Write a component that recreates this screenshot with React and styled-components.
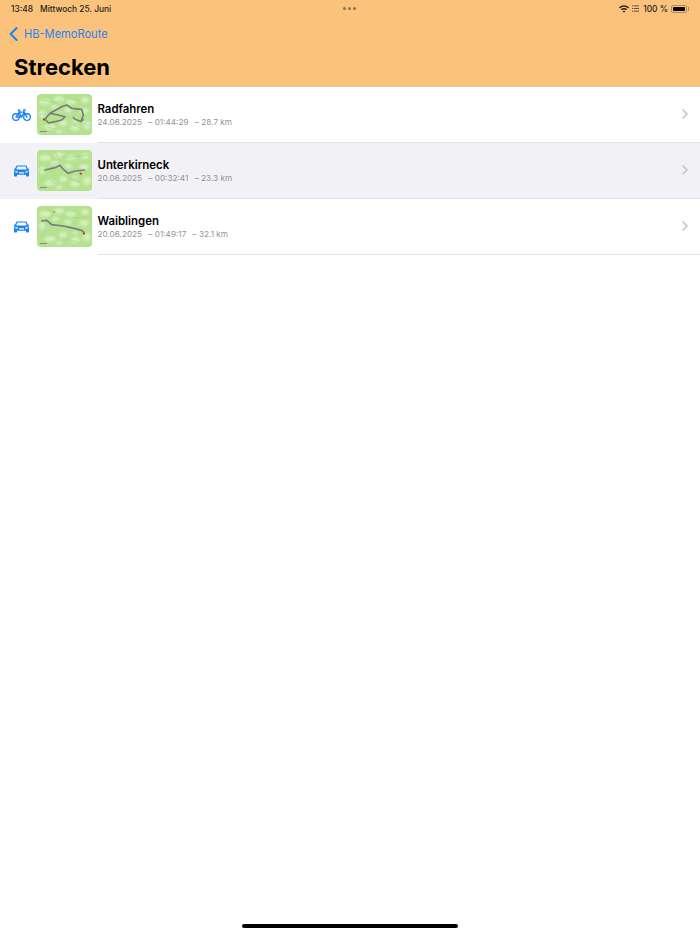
import React from "react";
import styled, { createGlobalStyle } from "styled-components";

const GlobalStyle = createGlobalStyle`
  html, body {
    margin: 0;
    padding: 0;
    background: #fff;
    font-family: Inter, "Liberation Sans", sans-serif;
  }
  * { box-sizing: border-box; }
`;

const routes = [
  { id: 1, name: "Radfahren", date: "24.06.2025", time: "01:44:29", dist: "28.7 km", kind: "bike", map: "a" },
  { id: 2, name: "Unterkirneck", date: "20.06.2025", time: "00:32:41", dist: "23.3 km", kind: "car", map: "b", active: true },
  { id: 3, name: "Waiblingen", date: "20.06.2025", time: "01:49:17", dist: "32.1 km", kind: "car", map: "c" },
];

const BikeIcon = () => (
  <svg width="20" height="14" viewBox="0 0 20 14" fill="none" stroke="#1c82f7" strokeWidth="1.4" strokeLinecap="round" strokeLinejoin="round">
    <circle cx="4.2" cy="9.2" r="3.5" />
    <circle cx="15.8" cy="9.2" r="3.5" />
    <path d="M4.2 9.2 L7.6 4 H13 L15.8 9.2 M7.6 4 L10 9.2 H4.2 M10 9.2 L13 4 L12.2 1.6 H14.2 M6.4 1.8 H8.6 M7.2 1.8 L7.6 4" />
  </svg>
);

const CarIcon = () => (
  <svg width="15" height="12" viewBox="0 0 15 12">
    <path
      fill="#1c82f7"
      fillRule="evenodd"
      d="M3.6 0.4 H11.4 C12.3 0.4 12.8 0.9 13.1 1.7 L13.8 3.6 H14.4 C14.8 3.6 15 3.9 15 4.2 C15 4.6 14.7 4.8 14.3 4.9 C14.8 5.5 15 6.2 15 7 V10.4 C15 11 14.6 11.5 14 11.5 H13 C12.4 11.5 12 11 12 10.4 V9.8 H3 V10.4 C3 11 2.6 11.5 2 11.5 H1 C0.4 11.5 0 11 0 10.4 V7 C0 6.2 0.2 5.5 0.7 4.9 C0.3 4.8 0 4.6 0 4.2 C0 3.9 0.2 3.6 0.6 3.6 H1.2 L1.9 1.7 C2.2 0.9 2.7 0.4 3.6 0.4 Z M3.8 1.6 C3.4 1.6 3.1 1.8 3 2.2 L2.4 4 C2.3 4.3 2.5 4.5 2.8 4.5 H12.2 C12.5 4.5 12.7 4.3 12.6 4 L12 2.2 C11.9 1.8 11.6 1.6 11.2 1.6 Z M1.4 6 V7.4 L3.8 7.8 V6.6 Z M13.6 6 L11.2 6.6 V7.8 L13.6 7.4 Z M5 7.2 V8.4 H10 V7.2 Z"
    />
  </svg>
);

const WifiIcon = () => (
  <svg width="10" height="8" viewBox="0 0 11 8">
    <path fill="#222" d="M5.5 0 C7.6 0 9.5 .8 11 2.2 L9.9 3.4 C8.7 2.3 7.2 1.6 5.5 1.6 C3.8 1.6 2.3 2.3 1.1 3.4 L0 2.2 C1.5 .8 3.4 0 5.5 0 Z M5.5 3 C6.8 3 8 3.5 8.9 4.3 L7.8 5.5 C7.2 5 6.4 4.6 5.5 4.6 C4.6 4.6 3.8 5 3.2 5.5 L2.1 4.3 C3 3.5 4.2 3 5.5 3 Z M5.5 5.8 L7 6.6 L5.5 8 L4 6.6 Z" />
  </svg>
);

const ListIcon = () => (
  <svg width="7" height="7" viewBox="0 0 8 7" fill="#444">
    <rect x="0" y="0" width="1.2" height="1" />
    <rect x="2" y="0" width="6" height="1" />
    <rect x="0" y="3" width="1.2" height="1" />
    <rect x="2" y="3" width="6" height="1" />
    <rect x="0" y="6" width="1.2" height="1" />
    <rect x="2" y="6" width="6" height="1" />
  </svg>
);

// hand-placed from the reference thumbnails
const tracks = {
  a: {
    line: "M8 25 L11.5 29 L18 27.7 L24.7 26 L28 22.7 L21.3 21 L13 19.3 L8 25 M13 19.3 L24.7 12.7 L29.7 11 L34.7 14.3 L44.7 15.3 L46.3 21 L44 27.5 L38 25.3 L36 23 M44 27.5 L46.5 25",
    river: "M0 21 L12 19 L24 17 L36 22 L46 29 L55 33",
    roads: "M5 6 L20 9 L24 4 M30 3 L44 8 M10 33 L24 36 M36 31 L48 36",
    start: [8.5, 25.5, "#39c93a"],
    end: [7, 25.5, "#e8262a"],
  },
  b: {
    line: "M8 20 L18 17.7 L23 15.3 L26.3 19.3 L31.3 23.3 L38 21 L48 20",
    river: "M0 22 L8 19 L20 13 L26 15 L32 21 L42 23 L55 17",
    roads: "M18 2 L24 12 M24 6 L34 8 M36 7 L52 5 M30 27 L44 33 M14 31 L22 36",
    start: [8, 20, "#39e03a"],
    end: [43.7, 23.7, "#e0262a"],
  },
  c: {
    line: "M4 15 L9.7 14.3 L14.7 18.7 L26.3 20 L38 22.7 L44.7 24.3 L47 26.7",
    river: "M0 24 L12 21 L24 19 L40 25 L55 22",
    roads: "M17 6 L13 14 M36 12 L50 11 M10 2 L17 6 M26 32 L40 36",
    start: [17.3, 6, "#d8a020"],
    end: [47, 27.5, "#e8262a"],
  },
};

const blobs = [
  [8, 8, 6, 3], [22, 5, 5, 3], [34, 8, 5, 2.5], [48, 6, 4, 3], [5, 20, 3, 4],
  [18, 13, 4, 2], [31, 16, 4, 2.5], [47, 17, 5, 3], [13, 33, 6, 3], [26, 29, 4, 3],
  [38, 34, 5, 3], [50, 31, 4, 4], [22, 37, 3, 2], [38, 27, 3, 1.5],
];

const MapThumb = ({ map }) => {
  const t = tracks[map];
  return (
    <Thumb viewBox="0 0 55 41" width="55" height="41">
      <defs>
        <filter id={`soft-${map}`} x="-10%" y="-10%" width="120%" height="120%">
          <feGaussianBlur stdDeviation="0.8" />
        </filter>
      </defs>
      <rect width="55" height="41" fill="#b5e28e" />
      <g fill="#d3efbb" filter={`url(#soft-${map})`}>
        {blobs.map(([cx, cy, rx, ry]) => (
          <ellipse key={`${cx}-${cy}`} cx={cx} cy={cy} rx={rx} ry={ry} />
        ))}
      </g>
      <path d={t.roads} fill="none" stroke="#a9c99a" strokeWidth="0.6" />
      <path d={t.river} fill="none" stroke="#c4d4cc" strokeWidth="1" />
      <path d={t.line} fill="none" stroke="#7b7e78" strokeWidth="1.7" strokeLinejoin="round" />
      <rect x="3" y="37" width="7" height="1" fill="#7f8f7a" />
      <rect x={t.start[0] - 1} y={t.start[1] - 1} width="2" height="2" fill={t.start[2]} />
      <rect x={t.end[0] - 1} y={t.end[1] - 1} width="2" height="2" fill={t.end[2]} />
    </Thumb>
  );
};

const App = () => {
  return (
    <Page>
      <GlobalStyle />
      <Header>
        <StatusBar>
          <StatusLeft>
            <span>13:48</span>
            <span>Mittwoch 25. Juni</span>
          </StatusLeft>
          <Dots>
            <i />
            <i />
            <i />
          </Dots>
          <StatusRight>
            <WifiIcon />
            <ListIcon />
            <span>100 %</span>
            <Battery>
              <BatteryFill />
            </Battery>
          </StatusRight>
        </StatusBar>
        <BackRow>
          <svg width="9" height="14" viewBox="0 0 9 14" fill="none" stroke="#1c82f7" strokeWidth="2" strokeLinecap="round" strokeLinejoin="round">
            <path d="M7.6 1 L1.6 7 L7.6 13" />
          </svg>
          <BackLabel>HB-MemoRoute</BackLabel>
        </BackRow>
        <Title>Strecken</Title>
      </Header>
      <List>
        {routes.map((r) => (
          <Row key={r.id} $active={r.active}>
            <KindIcon>{r.kind === "bike" ? <BikeIcon /> : <CarIcon />}</KindIcon>
            <MapThumb map={r.map} />
            <RowBody>
              <Info>
                <Name>{r.name}</Name>
                <Meta>
                  <span>{r.date}</span>
                  <span>– {r.time}</span>
                  <span>– {r.dist}</span>
                </Meta>
              </Info>
              <svg width="6" height="10" viewBox="0 0 6 10" fill="none" stroke="#c4c4c7" strokeWidth="1.6" strokeLinecap="round" strokeLinejoin="round">
                <path d="M1 1 L5 5 L1 9" />
              </svg>
            </RowBody>
          </Row>
        ))}
      </List>
      <HomeBar />
    </Page>
  );
};

const Page = styled.div`
  position: relative;
  width: 700px;
  height: 934px;
  overflow: hidden;
  background: #fff;
`;

// orange top area
const Header = styled.header`
  height: 87px;
  background: #fbc27c;
  border-bottom: 1px solid #d9c6ae;
`;

const StatusBar = styled.div`
  position: relative;
  display: flex;
  align-items: center;
  justify-content: space-between;
  height: 17px;
  padding: 0 13px 0 11px;
  font-size: 8.4px;
  font-weight: 500;
  color: #222;
`;

const StatusLeft = styled.div`
  display: flex;
  gap: 7px;
`;

const Dots = styled.div`
  position: absolute;
  left: 343px;
  top: 7px;
  display: flex;
  gap: 2px;

  i {
    width: 3px;
    height: 3px;
    border-radius: 50%;
    background: #8b7455;
  }
`;

const StatusRight = styled.div`
  display: flex;
  align-items: center;
  gap: 3px;
  span {
    margin-left: 1px;
  }
`;

const Battery = styled.div`
  position: relative;
  width: 16px;
  height: 8px;
  padding: 1px;
  border: 1px solid #a58a66;
  border-radius: 2px;

  &::after {
    content: "";
    position: absolute;
    right: -3px;
    top: 1px;
    width: 1px;
    height: 4px;
    background: #a58a66;
  }
`;

const BatteryFill = styled.div`
  height: 100%;
  background: #000;
  border-radius: 1px;
`;

const BackRow = styled.div`
  display: flex;
  align-items: center;
  gap: 6px;
  height: 33px;
  padding-left: 9px;
`;

const BackLabel = styled.span`
  font-size: 11.1px;
  color: #1c82f7;
`;

const Title = styled.h1`
  margin: 0;
  padding-left: 14px;
  font-size: 22px;
  font-weight: 700;
  line-height: 34px;
  color: #000;
`;

const List = styled.div`
  display: flex;
  flex-direction: column;
`;

const Row = styled.div`
  display: flex;
  align-items: center;
  height: 56px;
  padding: 0 0 1px 12px;
  background: ${(p) => (p.$active ? "#f1f1f6" : "#fff")};
`;

const KindIcon = styled.div`
  display: flex;
  justify-content: center;
  width: 19px;
  margin-right: 6px;
`;

const Thumb = styled.svg`
  flex-shrink: 0;
  border-radius: 4px;
`;

// the separator only runs under the text part of a row
const RowBody = styled.div`
  flex: 1;
  align-self: stretch;
  display: flex;
  align-items: center;
  justify-content: space-between;
  margin: 0 0 -1px 5.5px;
  padding: 0 12px 1px 0;
  border-bottom: 1px solid #e4e4e8;
`;

const Info = styled.div`
  display: flex;
  flex-direction: column;
`;

const Name = styled.div`
  font-size: 11.4px;
  font-weight: 600;
  line-height: 16px;
  color: #000;
`;

const Meta = styled.div`
  display: flex;
  gap: 6.3px;
  font-size: 8.2px;
  line-height: 11px;
  color: #939398;
`;

const HomeBar = styled.div`
  position: absolute;
  left: 242px;
  top: 924px;
  width: 216px;
  height: 4px;
  border-radius: 2px;
  background: #000;
`;

export default App;
